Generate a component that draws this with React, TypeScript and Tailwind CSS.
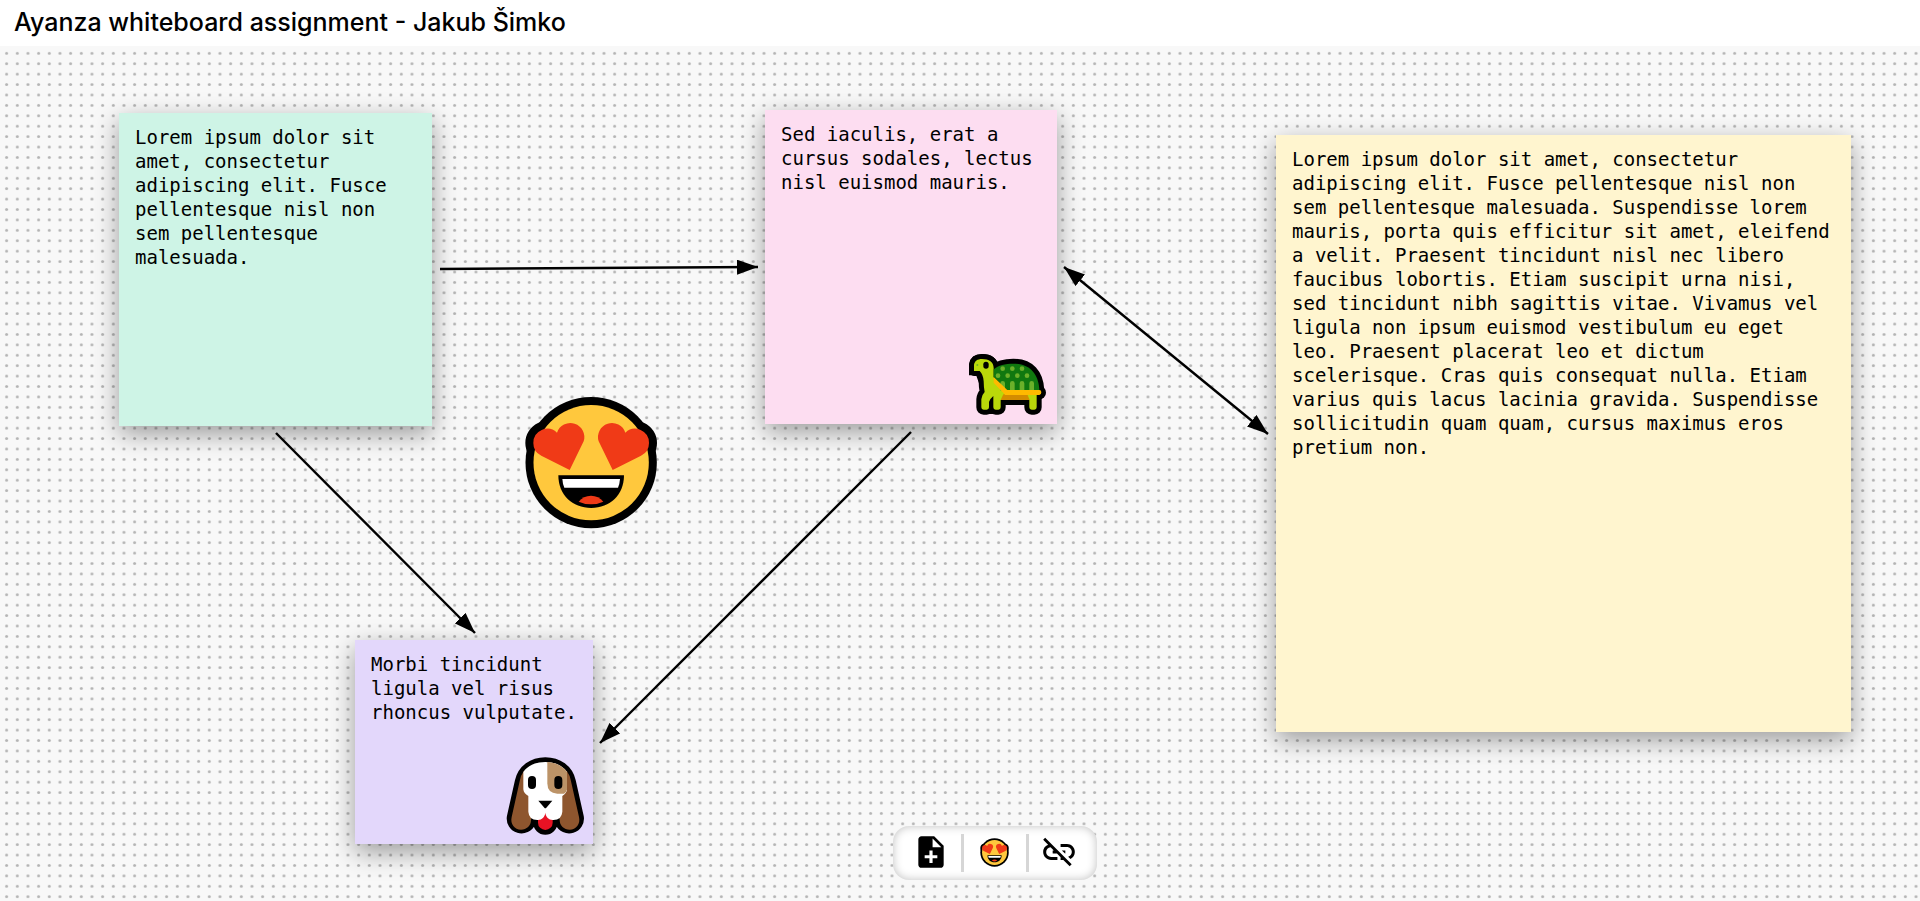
import { MdLinkOff, MdNoteAdd } from "react-icons/md";
import type { ReactNode } from "react";

const HEART =
  "M179 270 L94 227 A42 42 0 0 1 70 189 A42 42 0 0 1 141 158 A42 42 0 0 1 221 184 Z";

function HeartEyes({ className }: { className: string }) {
  return (
    <svg viewBox="42 48 402 402" className={className} aria-hidden="true">
      <g stroke="#000" strokeWidth="48" strokeLinejoin="round">
        <path d={HEART} />
        <path d={HEART} transform="translate(487 0) scale(-1 1)" />
      </g>
      <circle cx="243.5" cy="248" r="197" />
      <circle cx="243.5" cy="248" r="173" fill="#ffc83d" />
      <g fill="#f03a17">
        <path d={HEART} />
        <path d={HEART} transform="translate(487 0) scale(-1 1)" />
      </g>
      <path d="M145 286 H342 C342 345 300 384 243.5 384 C187 384 145 345 145 286 Z" />
      <path d="M157 297 H330 Q329 312 324 323 H163 Q158 312 157 297 Z" fill="#fff" />
      <path d="M206 365 Q220 347 243 347 Q266 347 280 365 Q263 373 243 373 Q223 373 206 365 Z" fill="#f03a17" />
    </svg>
  );
}

const TURTLE_BODY =
  "M72 93 V75 C74 63 82 57 96 57 C117 57 131 66 131 84 V112 L168 150 L260 160 V202 Q260 209 253 209 H245 Q238 209 238 202 V180 H152 V202 Q152 209 145 209 H137 Q130 209 130 202 V168 Q120 176 117 186 V202 Q117 209 110 209 H101 Q94 209 94 202 V178 Q95 165 104 156 Q101 140 101 124 Q100 104 89 93 Z";
const TURTLE_SHELL =
  "M131 112 V88 C145 76 165 71 190 71 C240 71 266 102 268 151 H172 Z";

function Turtle({ className }: { className: string }) {
  return (
    <svg viewBox="54 42 243 186" className={className} aria-hidden="true">
      <g stroke="#000" strokeWidth="30" strokeLinejoin="round">
        <path d="M72 91 H89 L101 124 L131 112 V84 C131 66 117 57 96 57 C82 57 74 63 72 75 Z" strokeLinejoin="miter" />
        <path d={TURTLE_BODY} />
        <path d={TURTLE_SHELL} />
        <path d="M262 158 H267" strokeWidth="42" strokeLinecap="round" />
      </g>
      <path d={TURTLE_BODY} fill="#bad80a" />
      <path d={TURTLE_SHELL} fill="#10780f" />
      <g fill="#6bb02a">
        <circle cx="158" cy="86" r="7" />
        <circle cx="187" cy="86" r="7" />
        <circle cx="216" cy="86" r="7" />
        <circle cx="144" cy="107" r="7" />
        <circle cx="173" cy="107" r="7" />
        <circle cx="202" cy="107" r="7" />
        <circle cx="231" cy="107" r="7" />
        <path d="M151 152 V130 A7 7 0 0 1 165 130 V152 Z M180 152 V130 A7 7 0 0 1 194 130 V152 Z M209 152 V130 A7 7 0 0 1 223 130 V152 Z M238 152 V130 A7 7 0 0 1 252 130 V152 Z" />
      </g>
      <path d="M160 163 H232 L239 180 H152 Z" fill="#d48c00" />
      <path d="M131 111 L172 150 H268 Q274 150 274 157 Q274 165 268 165 H166 L131 128 Z" fill="#ffb900" />
      <rect x="100" y="65" width="16" height="21" rx="8" />
      <circle cx="82" cy="75" r="3" fill="#6bb02a" />
    </svg>
  );
}

const DOG_HEAD =
  "M166 66 C128 66 97 88 89 124 L65 231 A30 30 0 0 0 122 248 L144 240 V248 A22 22 0 0 0 188 248 V240 L210 248 A30 30 0 0 0 267 231 L243 124 C235 88 204 66 166 66 Z";

function Dog({ className }: { className: string }) {
  return (
    <svg viewBox="48 48 237 240" className={className} aria-hidden="true">
      <path d={DOG_HEAD} stroke="#000" strokeWidth="29" strokeLinejoin="round" />
      <path d="M102 92 Q92 105 89 124 L65 231 C60 252 74 269 93 269 C110 269 123 257 123 240 L135 150 Z" fill="#8e562e" />
      <path d="M230 92 Q240 105 243 124 L267 231 C272 252 258 269 239 269 C222 269 209 257 209 240 L197 150 Z" fill="#8e562e" />
      <path d="M166 66 C135 66 112 78 100 96 V148 Q101 160 115 168 V215 Q117 240 142 240 H190 Q215 240 217 215 V168 Q230 160 231 148 V96 C219 78 197 66 166 66 Z" fill="#fff" />
      <path d="M172 66 C200 68 220 80 231 96 V148 Q230 156 222 161 H202 Q172 160 172 130 Z" fill="#bc9367" />
      <rect x="114" y="108" width="24" height="39" rx="12" />
      <rect x="193" y="108" width="24" height="39" rx="12" />
      <path d="M145 182 H187 L169 203 Q166 206 163 203 Z" />
      <path d="M166 218 C164 232 156 239 144 240 V248 A22 22 0 0 0 188 248 V240 C176 239 168 232 166 218 Z" fill="#e81224" />
    </svg>
  );
}

function Note({ place, children, sticker }: { place: string; children: string; sticker?: ReactNode }) {
  return (
    <article
      className={`absolute px-4 pt-3 shadow-[0_8px_24px_rgba(0,0,0,0.38)] ${place}`}
    >
      <p className="font-['DejaVu_Sans_Mono',monospace] text-[19px] leading-6 text-black">{children}</p>
      {sticker}
    </article>
  );
}

function DotGrid() {
  return (
    <svg className="absolute inset-0 h-full w-full" aria-hidden="true">
      <defs>
        <pattern id="dots" width="10.667" height="10.412" x="1.3" y="2.1" patternUnits="userSpaceOnUse">
          <circle cx="5.33" cy="5.2" r="1.5" fill="#b4b4b4" />
        </pattern>
      </defs>
      <rect width="100%" height="100%" fill="url(#dots)" />
    </svg>
  );
}

function Arrows() {
  return (
    <svg className="pointer-events-none absolute inset-0 h-full w-full" aria-hidden="true">
      <defs>
        <marker
          id="head"
          viewBox="0 0 21 15"
          refX="21"
          refY="7.5"
          markerWidth="21"
          markerHeight="15"
          markerUnits="userSpaceOnUse"
          orient="auto-start-reverse"
        >
          <path d="M0 0 L21 7.5 L0 15 Z" />
        </marker>
      </defs>
      <g stroke="#000" strokeWidth="2.4" fill="none">
        <path d="M440 223 L758 221" markerEnd="url(#head)" />
        <path d="M276 387 L475 587" markerEnd="url(#head)" />
        <path d="M911 386 L600 697" markerEnd="url(#head)" />
        <path d="M1064 221 L1268 388" markerStart="url(#head)" markerEnd="url(#head)" />
      </g>
    </svg>
  );
}

function Toolbar() {
  return (
    <div
      role="toolbar"
      aria-label="Whiteboard tools"
      className="absolute bottom-[21px] left-[46.5%] flex rounded-2xl bg-white p-2 shadow-[inset_0_0_10px_rgba(0,0,0,0.25)]"
    >
      <button type="button" aria-label="Add note" className="flex h-[38px] w-[60px] items-center justify-center pb-0.5">
        <MdNoteAdd className="size-[38px] shrink-0" />
      </button>
      <span className="w-[3px] bg-[#d6d6d6]" />
      <button type="button" aria-label="Add emoji" className="flex h-[38px] w-[62px] items-center justify-center pb-0.5">
        <HeartEyes className="size-[29px] shrink-0" />
      </button>
      <span className="w-[3px] bg-[#d6d6d6]" />
      <button type="button" aria-label="Disconnect" className="flex h-[38px] w-[60px] items-center justify-center pb-0.5">
        <MdLinkOff className="size-[38px] shrink-0" />
      </button>
    </div>
  );
}

export default function App() {
  return (
    <div className="flex min-h-screen flex-col bg-white text-black">
      <header className="flex h-[46px] items-center px-[14px] pb-0.5">
        <h1 className="font-['Inter',sans-serif] text-[25px] leading-8 font-[450]">
          Ayanza whiteboard assignment - Jakub Šimko
        </h1>
      </header>
      <main className="relative flex-1 overflow-hidden bg-[#f8f8f8]">
        <DotGrid />
        <Note place="left-[119px] top-[67px] h-[313px] w-[313px] bg-[#cef4e6]">
          Lorem ipsum dolor sit amet, consectetur adipiscing elit. Fusce pellentesque nisl non sem pellentesque malesuada.
        </Note>
        <Note
          place="left-[765px] top-[64px] h-[314px] w-[292px] bg-[#fdddf1]"
          sticker={<Turtle className="absolute right-2 bottom-2 h-[62px] w-[81px]" />}
        >
          Sed iaculis, erat a cursus sodales, lectus nisl euismod mauris.
        </Note>
        <Note place="left-[1276px] top-[89px] h-[597px] w-[575px] bg-[#fff5cf]">
          Lorem ipsum dolor sit amet, consectetur adipiscing elit. Fusce pellentesque nisl non sem pellentesque malesuada. Suspendisse lorem mauris, porta quis efficitur sit amet, eleifend a velit. Praesent tincidunt nisl nec libero faucibus lobortis. Etiam suscipit urna nisi, sed tincidunt nibh sagittis vitae. Vivamus vel ligula non ipsum euismod vestibulum eu eget leo. Praesent placerat leo et dictum scelerisque. Cras quis consequat nulla. Etiam varius quis lacus lacinia gravida. Suspendisse sollicitudin quam quam, cursus maximus eros pretium non.
        </Note>
        <Note
          place="left-[355px] top-[594px] h-[204px] w-[238px] bg-[#e3d7fb]"
          sticker={<Dog className="absolute right-2 bottom-2 h-[80px] w-[79px]" />}
        >
          Morbi tincidunt ligula vel risus rhoncus vulputate.
        </Note>
        <HeartEyes className="absolute left-[524px] top-[350px] size-[134px]" />
        <Arrows />
        <Toolbar />
      </main>
    </div>
  );
}
